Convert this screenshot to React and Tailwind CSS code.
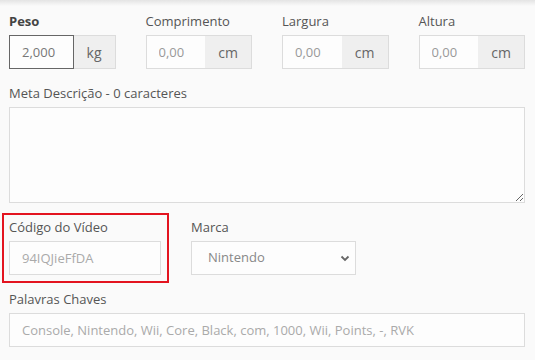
import React from 'react';

const font = { fontFamily: '"Open Sans", "Noto Sans", sans-serif' };

const DimField = ({ label, value, unit, bold, active }) => (
  <div className="flex flex-col">
    <label
      className={
        'block text-[13px] leading-[18px] mb-[5px] ' +
        (bold ? 'font-bold text-[#444]' : 'text-[#555]')
      }
    >
      {label}
    </label>
    <div className="flex h-[34px]">
      <input
        readOnly
        value={value}
        className={
          'min-w-0 flex-1 h-full bg-[#fdfdfd] px-3 text-[13px] outline-none border ' +
          (active ? 'border-[#666] text-[#777]' : 'border-[#dcdcdc] border-r-0 text-[#999]')
        }
      />
      <span className="flex items-center justify-center px-[13px] h-full bg-[#efefef] border border-[#dcdcdc] border-l-0 text-[14px] text-[#666]">
        {unit}
      </span>
    </div>
  </div>
);

const Label = ({ children }) => (
  <label className="block text-[13px] leading-[18px] mb-[5px] text-[#555]">{children}</label>
);

export default function App() {
  return (
    <div className="w-[535px] h-[360px] overflow-hidden bg-[#fafafa]" style={font}>
      <div className="h-[6px] bg-gradient-to-b from-[#e4e4e4] to-[#fafafa]" />
      <div className="pl-[9px] pr-[10px] pt-[6px]">
        <div className="grid grid-cols-4 gap-x-[30px]">
          <DimField label="Peso" value="2,000" unit="kg" bold active />
          <DimField label="Comprimento" value="0,00" unit="cm" />
          <DimField label="Largura" value="0,00" unit="cm" />
          <DimField label="Altura" value="0,00" unit="cm" />
        </div>

        <div className="mt-[15px]">
          <Label>Meta Descrição - 0 caracteres</Label>
          <textarea
            readOnly
            className="block w-full h-[96px] bg-[#fdfdfd] border border-[#dcdcdc] outline-none resize-y"
          />
        </div>

        <div className="mt-[15px] flex gap-[30px]">
          <div className="relative w-[152px]">
            <div className="absolute left-[-7px] top-[-5px] w-[167px] h-[70px] border-2 border-[#e3141f] pointer-events-none" />
            <Label>Código do Vídeo</Label>
            <input
              readOnly
              value="94IQJieFfDA"
              className="block w-full h-[34px] bg-[#fdfdfd] px-3 text-[13px] text-[#aaa] border border-[#dcdcdc] outline-none"
            />
          </div>
          <div className="w-[165px]">
            <Label>Marca</Label>
            <div className="flex items-center justify-between h-[34px] bg-[#fdfdfd] border border-[#dcdcdc] pl-[16px] pr-[5px] text-[13px] text-[#888]">
              <span>Nintendo</span>
              <svg width="10" height="10" viewBox="0 0 10 10">
                <path d="M1.5 3.5 L5 7 L8.5 3.5" fill="none" stroke="#666" strokeWidth="1.8" />
              </svg>
            </div>
          </div>
        </div>

        <div className="mt-[15px]">
          <Label>Palavras Chaves</Label>
          <input
            readOnly
            value="Console, Nintendo, Wii, Core, Black, com, 1000, Wii, Points, -, RVK"
            className="block w-full h-[34px] bg-[#fdfdfd] px-3 text-[13px] text-[#aaa] border border-[#dcdcdc] outline-none"
          />
        </div>
      </div>
    </div>
  );
}
